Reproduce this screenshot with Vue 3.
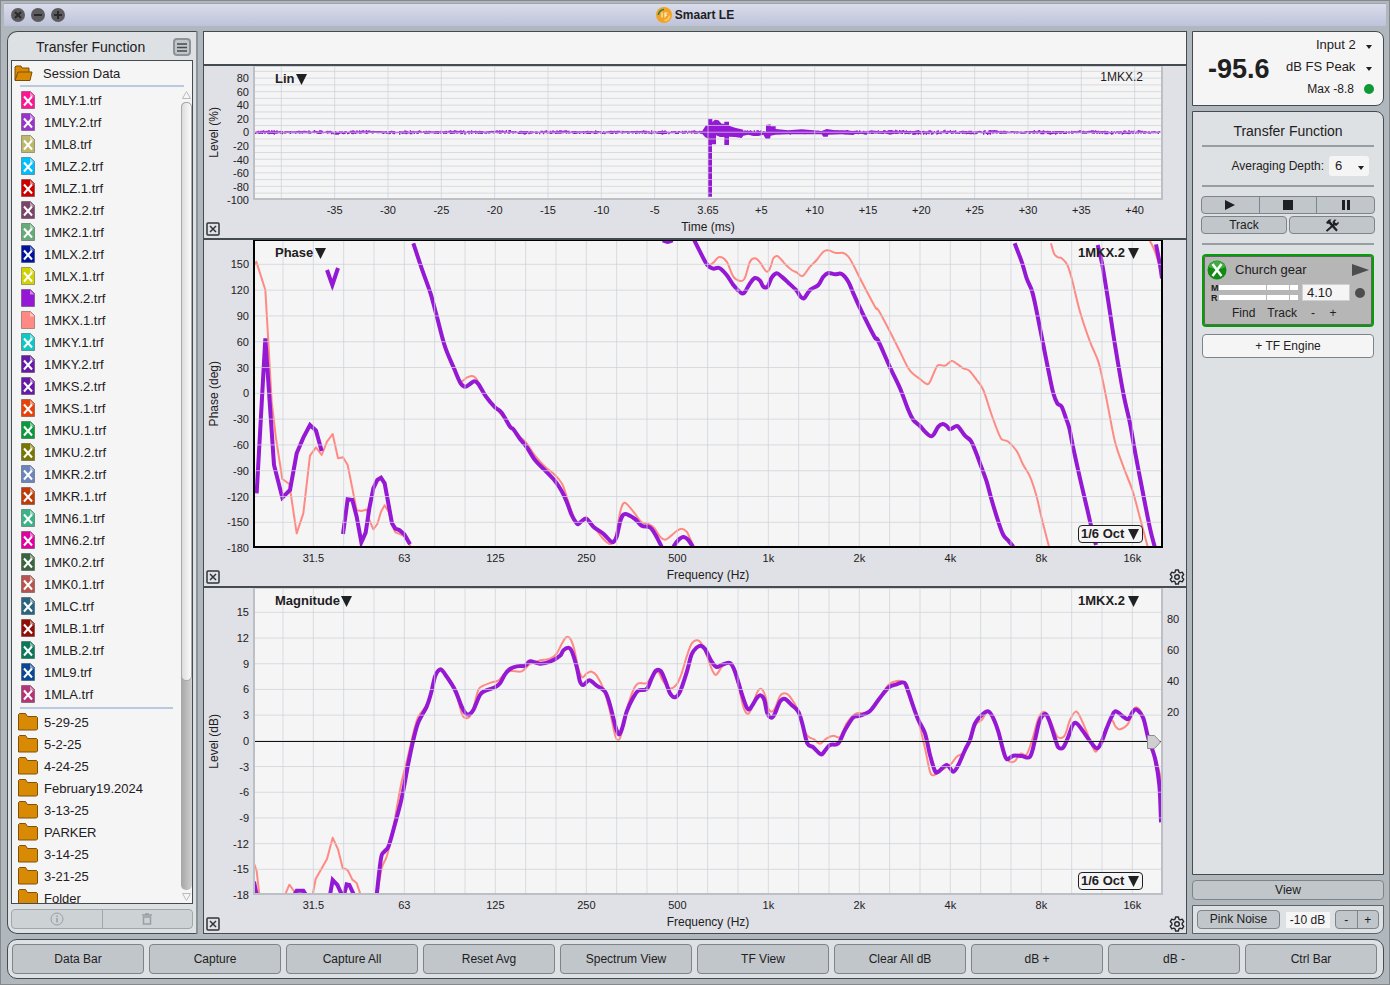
<script setup>
import { ref } from 'vue'

const files = ref([
    { name: '1MLY.1.trf', color: '#ff1493' },
    { name: '1MLY.2.trf', color: '#9a32cd' },
    { name: '1ML8.trf', color: '#bdb76b' },
    { name: '1MLZ.2.trf', color: '#00bfff' },
    { name: '1MLZ.1.trf', color: '#cd0000' },
    { name: '1MK2.2.trf', color: '#7a4468' },
    { name: '1MK2.1.trf', color: '#66ab78' },
    { name: '1MLX.2.trf', color: '#00149b' },
    { name: '1MLX.1.trf', color: '#d2d200' },
    { name: '1MKX.2.trf', color: '#9418d4', shown: true },
    { name: '1MKX.1.trf', color: '#ff8a84', shown: true },
    { name: '1MKY.1.trf', color: '#0fc8c4' },
    { name: '1MKY.2.trf', color: '#661aa6' },
    { name: '1MKS.2.trf', color: '#661aa6' },
    { name: '1MKS.1.trf', color: '#e8420a' },
    { name: '1MKU.1.trf', color: '#0a9a3c' },
    { name: '1MKU.2.trf', color: '#787800' },
    { name: '1MKR.2.trf', color: '#6a86bc' },
    { name: '1MKR.1.trf', color: '#c03a08' },
    { name: '1MN6.1.trf', color: '#3cb488' },
    { name: '1MN6.2.trf', color: '#e000a0' },
    { name: '1MK0.2.trf', color: '#3a6440' },
    { name: '1MK0.1.trf', color: '#b85450' },
    { name: '1MLC.trf', color: '#2a6480' },
    { name: '1MLB.1.trf', color: '#901008' },
    { name: '1MLB.2.trf', color: '#087858' },
    { name: '1ML9.trf', color: '#084894' },
    { name: '1MLA.trf', color: '#b43478' }
])

const folders = ref(['5-29-25', '5-2-25', '4-24-25', 'February19.2024', '3-13-25', 'PARKER', '3-14-25', '3-21-25', 'Folder'])

const commands = ['Data Bar', 'Capture', 'Capture All', 'Reset Avg', 'Spectrum View', 'TF View', 'Clear All dB', 'dB +', 'dB -', 'Ctrl Bar']

const delay = ref('4.10')

function range(count, start, step) {
    return Array.from({ length: count }, (_, i) => start + i * step)
}

// "x,y x,y ..." to a smooth path (Catmull-Rom)
function smooth(points, k = 6) {
    const p = points.split(' ').map(s => s.split(',').map(Number))
    let d = `M${p[0][0]} ${p[0][1]}`
    for (let i = 0; i < p.length - 1; i++) {
        const a = p[i - 1] || p[i]
        const b = p[i]
        const c = p[i + 1]
        const e = p[i + 2] || c
        d += `C${b[0] + (c[0] - a[0]) / k} ${b[1] + (c[1] - a[1]) / k} ${c[0] - (e[0] - b[0]) / k} ${c[1] - (e[1] - b[1]) / k} ${c[0]} ${c[1]}`
    }
    return d
}

function straight(points) {
    return 'M' + points.split(' ').join('L')
}

// noise floor of the impulse response
function noise() {
    let seed = 7
    const rand = () => {
        seed = (seed * 16807) % 2147483647
        return seed / 2147483647
    }
    let d = ''
    for (let x = 0; x < 2715; x += 4) {
        const gain = x > 1800 && x < 2200 ? 1.3 : 1
        const up = Math.round(2 + rand() * 5 * gain * (0.75 + 0.25 * Math.sin(x / 23)))
        const down = Math.round(2 + rand() * 5 * gain * (0.75 + 0.25 * Math.sin(x / 31)))
        d += `M${x} ${196 - up}h4v${up + down}h-4z`
    }
    return d
}

const burst = 'M1340 194L1353 175H1359V155H1372V165L1380 158L1390 160L1400 170H1408V164H1422V176L1440 182L1465 188V194H1533V174L1547 172V178H1562V186L1600 190L1640 187L1700 192L1715 186L1740 190L1760 190L1830 194L1850 190L1870 194L1890 194L1905 189L1925 193L1980 192L1990 189L2000 194V199L1960 198L1925 199L1905 203L1890 199L1800 201L1795 204L1760 202L1720 203L1718 209H1705L1700 202L1600 202L1562 203L1547 206L1545 215H1532L1525 203L1510 207H1495L1480 203L1465 206L1460 213L1440 210L1422 209V234H1408V210L1395 210L1383 205V232H1371V389H1359V215L1350 210L1340 199Z'

const phaseRed = [
    straight('0,72 4,62 31,147 40,302 50,482 63,592 82,714 103,729 125,877 145,817 165,644 183,619 200,642 216,602 233,579 249,652 264,649 278,672 293,747 305,808 320,810 335,805 343,837 355,865 367,849 378,812 389,793 401,812 411,852 421,874 435,879 450,887 467,917'),
    smooth('475,7 525,152 547,232 570,317 597,382 615,419 625,418 635,410 650,405 663,412 685,452 720,498 770,559 795,587 815,607 840,644 870,677 900,702 922,730 935,767 950,812 967,845 993,829 1015,855 1045,894 1065,909 1077,902 1085,872 1097,807 1110,785 1135,812 1160,844 1180,849 1197,860 1215,887 1230,896 1245,887 1265,870 1280,863 1295,872 1305,892 1317,917'),
    smooth('1315,-8 1335,32 1360,70 1375,65 1393,48 1415,62 1435,107 1457,120 1470,110 1485,62 1500,52 1515,64 1535,92 1547,77 1555,52 1567,45 1580,57 1590,69 1610,87 1625,94 1643,105 1665,77 1685,57 1705,32 1720,28 1743,36 1765,36 1780,47 1795,72 1815,112 1860,197 1870,207 1905,272 1935,332 1960,382 1975,399 1995,414 2015,429 2025,422 2045,377 2055,372 2070,374 2090,360 2105,368 2125,382 2143,389 2165,417 2185,447 2210,522 2235,587 2245,597 2260,602 2285,630 2305,672 2325,707 2345,767 2360,832 2382,917'),
    smooth('2388,7 2397,37 2407,48 2420,52 2437,72 2450,112 2475,212 2505,302 2530,362 2543,417 2560,502 2580,602 2605,677 2632,747 2650,812 2678,917'),
    smooth('2685,0 2700,32 2720,92')
]

const phasePurple = [
    straight('5,757 31,292 57,672 82,770 105,747 125,637 145,590 165,552 183,569 200,630'),
    straight('216,87 232,132 249,81'),
    straight('264,879 278,775 292,777 305,827 319,904 332,875 343,802 355,742 367,717 378,710 389,727 400,787 411,847 421,863 433,867 448,880 465,910'),
    smooth('475,7 500,82 525,152 535,187 547,232 570,317 597,382 617,427 632,437 645,429 658,421 670,429 693,467 720,499 740,515 765,557 775,565 795,594 815,618 840,657 870,688 900,720 920,750 935,782 950,822 963,844 970,849 993,833 1015,857 1045,878 1065,899 1075,903 1085,887 1097,837 1110,819 1140,834 1160,854 1185,859 1200,879 1220,917'),
    smooth('1255,917 1270,897 1285,888 1300,897 1313,917'),
    smooth('1223,-2 1238,3 1253,-2'),
    smooth('1315,-8 1335,32 1357,72 1375,83 1393,81 1415,102 1435,132 1455,153 1467,156 1485,127 1500,111 1515,119 1525,137 1538,137 1550,110 1565,97 1580,107 1600,125 1625,149 1635,165 1647,172 1665,147 1690,132 1705,107 1720,96 1740,100 1760,99 1780,122 1795,157 1813,197 1835,242 1860,290 1870,300 1905,379 1935,442 1960,507 1975,537 1995,555 2010,572 2025,585 2035,582 2050,557 2063,549 2075,555 2085,565 2100,557 2110,557 2130,584 2147,599 2160,627 2175,667 2195,722 2210,777 2230,842 2245,882 2260,899 2275,917'),
    smooth('2279,7 2300,62 2315,112 2330,147 2340,187 2355,262 2365,312 2380,387 2395,457 2407,487 2420,497 2433,532 2443,562 2455,622 2475,712 2495,797 2510,862 2523,912'),
    smooth('2528,12 2542,72 2560,182 2580,312 2605,457 2625,547 2640,632 2665,762 2685,862 2699,917'),
    smooth('2703,10 2715,72 2721,112')
]

const magRed = [
    straight('-5,818 5,846 13,918'),
    straight('90,918 103,887 117,906 121,918'),
    straight('173,918 182,870 216,810 233,746 249,781 263,837 278,843 292,872 305,882 317,918'),
    smooth('367,918 380,838 395,803 410,743 425,658 440,578 455,518 475,433 490,383 515,348 528,308 540,260 557,238 575,258 600,300 620,373 632,387 643,384 655,358 670,303 685,290 710,280 730,275 750,253 770,246 800,247 825,225 855,214 885,209 905,194 920,165 933,145 945,148 957,178 970,238 982,265 995,253 1010,248 1025,260 1047,303 1065,368 1080,438 1090,454 1100,433 1115,363 1135,303 1150,283 1175,282 1193,258 1210,250 1225,278 1245,298 1265,286 1280,253 1295,203 1310,164 1328,154 1345,173 1360,213 1375,250 1385,256 1405,228 1425,222 1445,268 1465,353 1478,375 1490,358 1505,313 1518,299 1530,318 1540,358 1550,368 1560,358 1575,321 1590,313 1605,323 1630,366 1645,418 1660,443 1677,451 1695,464 1715,448 1735,440 1755,444 1775,403 1800,375 1825,372 1845,365 1875,328 1900,288 1925,276 1945,280 1960,318 1990,398 2010,478 2025,548 2035,559 2045,553 2075,534 2090,523 2105,503 2130,488 2145,450 2163,406 2180,393 2200,366 2215,388 2230,428 2247,498 2265,518 2280,516 2297,494 2315,496 2333,448 2350,388 2368,368 2385,393 2405,440 2417,447 2430,438 2445,393 2462,368 2475,383 2495,428 2515,478 2525,486 2540,453 2555,413 2570,393 2582,413 2595,421 2620,403 2635,363 2645,355 2660,373 2680,443 2700,503 2715,558 2721,628')
]

const magPurple = [
    straight('-3,878 5,918'),
    straight('118,918 125,905 145,905 153,918'),
    straight('225,918 233,873 247,888 262,920'),
    straight('267,918 275,886 283,888 297,918'),
    smooth('365,918 378,808 388,788 400,773 415,723 440,628 460,523 475,453 490,400 515,353 528,313 540,263 550,245 560,243 575,263 600,303 620,353 632,373 643,376 655,363 675,318 690,306 720,295 735,283 750,256 765,240 785,232 810,230 825,217 855,224 885,218 915,200 925,184 940,176 950,186 965,233 975,278 985,288 1003,274 1025,290 1050,308 1065,348 1083,418 1093,436 1103,413 1115,368 1135,325 1150,305 1175,300 1190,268 1203,245 1217,246 1230,273 1245,313 1260,325 1275,308 1295,250 1310,196 1325,176 1337,170 1350,180 1370,218 1385,234 1400,228 1425,222 1440,248 1460,313 1475,355 1485,359 1505,328 1517,319 1528,333 1537,373 1550,386 1560,373 1575,338 1590,330 1610,348 1630,368 1643,408 1657,463 1675,475 1698,496 1710,485 1725,468 1750,463 1770,423 1795,385 1813,381 1845,366 1870,333 1900,296 1925,286 1948,281 1960,308 1975,353 1990,393 2010,433 2025,498 2040,546 2050,548 2075,528 2095,548 2110,528 2130,483 2145,453 2160,403 2180,378 2200,367 2215,388 2230,428 2243,478 2255,510 2275,500 2300,501 2325,503 2340,453 2353,398 2370,375 2382,393 2400,448 2410,475 2425,475 2440,443 2453,408 2465,403 2485,428 2510,463 2527,478 2540,458 2555,418 2570,383 2582,367 2605,383 2620,390 2635,366 2647,363 2665,388 2680,448 2700,508 2713,588 2718,700')
]

const octaves = ['31.5', '63', '125', '250', '500', '1k', '2k', '4k', '8k', '16k'].map((t, i) => ({ t, x: 175 + i * 273 }))
const octaveGrid = range(29, 84, 91)

const charts = ref([
    {
        id: 'impulse',
        title: 'Lin',
        trace: '1MKX.2',
        yTitle: 'Level (%)',
        xTitle: 'Time (ms)',
        height: 393,
        grid: { x: range(17, 79, 160), y: range(19, 13, 20.3) },
        yTicks: ['80', '60', '40', '20', '0', '-20', '-40', '-60', '-80', '-100'].map((t, i) => ({ t, y: 34 + i * 40.6 })),
        xTicks: ['-35', '-30', '-25', '-20', '-15', '-10', '-5', '3.65', '+5', '+10', '+15', '+20', '+25', '+30', '+35', '+40'].map((t, i) => ({ t, x: 239 + i * 160 })),
        fills: [noise(), burst],
        red: [],
        purple: []
    },
    {
        id: 'phase',
        title: 'Phase',
        trace: '1MKX.2',
        yTitle: 'Phase (deg)',
        xTitle: 'Frequency (Hz)',
        height: 915,
        active: true,
        banded: true,
        grid: { x: octaveGrid, y: range(11, 70, 77.4) },
        yTicks: range(12, 150, -30).map((t, i) => ({ t, y: 70 + i * 77.4 })),
        xTicks: octaves,
        fills: [],
        red: phaseRed,
        purple: phasePurple
    },
    {
        id: 'magnitude',
        title: 'Magnitude',
        trace: '1MKX.2',
        yTitle: 'Level (dB)',
        xTitle: 'Frequency (Hz)',
        height: 912,
        banded: true,
        zero: 457,
        grid: { x: octaveGrid, y: range(11, 70, 77.1) },
        yTicks: range(12, 15, -3).map((t, i) => ({ t, y: 70 + i * 77.1 })),
        rightTicks: ['80', '60', '40', '20'].map((t, i) => ({ t, y: 90 + i * 93 })),
        xTicks: octaves,
        fills: [],
        red: magRed,
        purple: magPurple
    }
])

function percent(value, total) {
    return (value / total * 100).toFixed(3) + '%'
}
</script>

<template>
    <div class="window">
        <header class="title-bar">
            <div class="lights">
                <button type="button" aria-label="Close window">
                    <svg width="14" height="14" viewBox="0 0 14 14"><circle cx="7" cy="7" r="7" /><path d="M4 4l6 6M10 4l-6 6" /></svg>
                </button>
                <button type="button" aria-label="Minimize window">
                    <svg width="14" height="14" viewBox="0 0 14 14"><circle cx="7" cy="7" r="7" /><path d="M3 7h8" /></svg>
                </button>
                <button type="button" aria-label="Maximize window">
                    <svg width="14" height="14" viewBox="0 0 14 14"><circle cx="7" cy="7" r="7" /><path d="M3 7h8M7 3v8" /></svg>
                </button>
            </div>
            <h1>
                <svg width="16" height="16" viewBox="0 0 16 16">
                    <circle cx="8" cy="8" r="8" fill="#f2a324" />
                    <path d="M2.500 8A5.500 5.500 0 0 1 8 2.500" fill="none" stroke="#2d8056" stroke-width="1.500" />
                    <path d="M13.500 8.500A5.500 5.500 0 0 1 8.500 13.500" fill="none" stroke="#ffd671" stroke-width="1.500" />
                    <path d="M6 5.500v5M9 10.500V6h2.500M9 8.200h2" fill="none" stroke="#fff0d0" stroke-width="1.200" />
                </svg>
                Smaart LE
            </h1>
        </header>

        <main class="workspace">
            <aside class="panel data-bar">
                <div class="data-head">
                    <h2>Transfer Function</h2>
                    <button type="button" class="menu-button" aria-label="Menu">
                        <svg width="10" height="9" viewBox="0 0 10 9"><path d="M0 1h10M0 4.500h10M0 8h10" stroke="#454b4f" stroke-width="1.300" /></svg>
                    </button>
                </div>

                <div class="file-box">
                    <div class="session">
                        <svg width="19" height="17" viewBox="0 0 19 17">
                            <path d="M1 15V2l1-1h5l1 2h7v4" fill="#d98a04" stroke="#7d4e02" />
                            <path d="M1 15.500L4 7h14l-2 8.500z" fill="#d98a04" stroke="#7d4e02" />
                        </svg>
                        <span>Session Data</span>
                    </div>
                    <div class="file-scroll">
                        <div class="file-list">
                            <ul>
                                <li v-for="file in files" :key="file.name">
                                    <svg width="14" height="18" viewBox="0 0 14 18">
                                        <path d="M.5.5h9l4 4v13H.5z" :fill="file.color" stroke="#000" stroke-opacity=".3" />
                                        <path d="M9 1v4.500h4.500z" fill="#fff" fill-opacity=".5" />
                                        <path v-if="!file.shown" d="M3 5.500l8 9M11 5.500l-8 9" stroke="#fff" stroke-width="2" />
                                    </svg>
                                    <span>{{ file.name }}</span>
                                </li>
                            </ul>
                            <ul class="folders">
                                <li v-for="folder in folders" :key="folder">
                                    <svg width="20" height="18" viewBox="0 0 20 18">
                                        <path d="M.5 17V1.500l1-1h6l2 3h9l1 1V16l-1 1z" fill="#d98a04" stroke="#80510a" />
                                    </svg>
                                    <span>{{ folder }}</span>
                                </li>
                            </ul>
                        </div>
                        <div class="scrollbar">
                            <svg width="9" height="8" viewBox="0 0 9 8"><path d="M.5 7.500L4.500.5l4 7z" fill="none" stroke="#b9bbbc" /></svg>
                            <div class="track"><div class="thumb"></div></div>
                            <svg width="9" height="8" viewBox="0 0 9 8"><path d="M.5.5l4 7 4-7z" fill="none" stroke="#b9bbbc" /></svg>
                        </div>
                    </div>
                </div>

                <div class="segments data-foot">
                    <button type="button" aria-label="Info" disabled>
                        <svg width="14" height="14" viewBox="0 0 14 14" fill="none" stroke="#999fa3"><circle cx="7" cy="7" r="6" /><path d="M7 6v4.500M7 3.500v1.500" stroke-width="1.500" /></svg>
                    </button>
                    <button type="button" aria-label="Delete" disabled>
                        <svg width="10" height="12" viewBox="0 0 10 12" fill="none" stroke="#999fa3" stroke-width="1.500"><path d="M0 2h10M3 1h4M1.500 4v7h7V4z" /></svg>
                    </button>
                </div>
            </aside>

            <section class="plots">
                <div class="cursor-strip"></div>
                <div v-for="chart in charts" :key="chart.id" class="chart">
                    <div class="y-axis">
                        <span class="y-title">{{ chart.yTitle }}</span>
                        <svg class="ticks">
                            <text v-for="tick in chart.yTicks" :key="tick.t" x="100%" :y="percent(tick.y, chart.height)" dy="4" text-anchor="end">{{ tick.t }}</text>
                        </svg>
                    </div>

                    <div class="plot" :class="{ active: chart.active }">
                        <svg class="graph" :viewBox="`0 0 2718 ${chart.height}`" preserveAspectRatio="none">
                            <path v-for="(d, i) in chart.fills" :key="'f' + i" :d="d" class="fill" />
                            <path v-for="(d, i) in chart.red" :key="'r' + i" :d="d" class="line red" />
                            <path v-for="(d, i) in chart.purple" :key="'p' + i" :d="d" class="line purple" />
                            <path v-for="x in chart.grid.x" :key="'x' + x" :d="`M${x} 0V${chart.height}`" class="line grid" />
                            <path v-for="y in chart.grid.y" :key="'y' + y" :d="`M0 ${y}H2718`" class="line grid" />
                            <path v-if="chart.zero" :d="`M0 ${chart.zero}H2718`" class="line zero" />
                        </svg>
                        <label class="picker plot-type">
                            <select :aria-label="chart.id + ' plot type'"><option>{{ chart.title }}</option></select>
                            <svg width="11" height="11" viewBox="0 0 11 11"><path d="M0 0h11L5.500 11z" /></svg>
                        </label>
                        <label v-if="chart.banded" class="picker trace">
                            <select :aria-label="chart.id + ' trace'"><option>{{ chart.trace }}</option></select>
                            <svg width="11" height="11" viewBox="0 0 11 11"><path d="M0 0h11L5.500 11z" /></svg>
                        </label>
                        <span v-else class="trace-name">{{ chart.trace }}</span>
                        <label v-if="chart.banded" class="picker banding">
                            <select :aria-label="chart.id + ' smoothing'"><option>1/6 Oct</option></select>
                            <svg width="11" height="11" viewBox="0 0 11 11"><path d="M0 0h11L5.500 11z" /></svg>
                        </label>
                        <svg v-if="chart.zero" class="handle" width="14" height="14" viewBox="0 0 14 14">
                            <path d="M.5.5h7l6 6.500-6 6.500h-7z" fill="#cfcfcf" stroke="#8b8b8b" />
                        </svg>
                    </div>

                    <div class="y-axis-right">
                        <svg class="ticks">
                            <text v-for="tick in chart.rightTicks" :key="tick.t" x="4" :y="percent(tick.y, chart.height)" dy="4">{{ tick.t }}</text>
                        </svg>
                    </div>

                    <div class="corner">
                        <button type="button" aria-label="Close plot">
                            <svg width="14" height="14" viewBox="0 0 14 14" fill="none" stroke="#30353a"><rect x="1" y="1" width="12" height="12" rx="1" stroke-width="1.500" /><path d="M4 4l6 6M10 4l-6 6" stroke-width="1.500" /></svg>
                        </button>
                    </div>
                    <div class="x-axis">
                        <svg class="x-ticks">
                            <text v-for="tick in chart.xTicks" :key="tick.t" :x="percent(tick.x, 2718)" y="14" text-anchor="middle">{{ tick.t }}</text>
                        </svg>
                        <span>{{ chart.xTitle }}</span>
                    </div>
                    <div class="corner right">
                        <button v-if="chart.banded" type="button" aria-label="Plot settings">
                            <svg width="16" height="16" viewBox="0 0 16 16" fill="none" stroke="#25292c" stroke-width="1.400" stroke-linejoin="round">
                                <path d="M6.600 1h2.800l.5 2.100 1.300.7 2-.7 1.500 2.500L13.200 7.200v1.600l1.500 1.500-1.500 2.500-2-.6-1.300.7-.5 2.100H6.600l-.5-2.100-1.300-.7-2 .6-1.500-2.500L2.800 8.800V7.200L1.300 5.600l1.500-2.500 2 .7 1.300-.7z" />
                                <circle cx="8" cy="8" r="2.300" />
                            </svg>
                        </button>
                    </div>
                </div>
            </section>

            <aside class="control-bar">
                <section class="panel meter">
                    <output>-95.6</output>
                    <div class="meter-side">
                        <label class="picker">
                            <select aria-label="Input"><option>Input 2</option></select>
                            <svg width="6" height="4" viewBox="0 0 6 4"><path d="M0 0h6L3 4z" /></svg>
                        </label>
                        <label class="picker">
                            <select aria-label="Scale"><option>dB FS Peak</option></select>
                            <svg width="6" height="4" viewBox="0 0 6 4"><path d="M0 0h6L3 4z" /></svg>
                        </label>
                        <div class="max">Max -8.8 <i class="dot"></i></div>
                    </div>
                </section>

                <section class="panel transfer">
                    <h2>Transfer Function</h2>
                    <hr>
                    <div class="depth">
                        <label for="depth">Averaging Depth:</label>
                        <span class="picker depth-box">
                            <select id="depth"><option>6</option></select>
                            <svg width="6" height="4" viewBox="0 0 6 4"><path d="M0 0h6L3 4z" /></svg>
                        </span>
                    </div>
                    <hr>
                    <div class="transport">
                        <div class="segments">
                            <button type="button" aria-label="Play"><svg width="10" height="10" viewBox="0 0 10 10"><path d="M0 0l10 5-10 5z" /></svg></button>
                            <button type="button" aria-label="Stop"><svg width="10" height="10" viewBox="0 0 10 10"><path d="M0 0h10v10H0z" /></svg></button>
                            <button type="button" aria-label="Pause"><svg width="8" height="10" viewBox="0 0 8 10"><path d="M0 0h3v10H0zM5 0h3v10H5z" /></svg></button>
                        </div>
                        <div class="pair">
                            <button type="button" class="button">Track</button>
                            <button type="button" class="button" aria-label="Settings">
                                <svg width="14" height="13" viewBox="0 0 14 13">
                                    <path d="M2.200 12.800L.8 11.400 8 5 7.500 2.800 9.500.5l2 .2L9.800 2.400l.4 1.400 1.500.4L13.500 2.500l.2 2-2.200 2.200-2.200-.3z" />
                                    <path d="M1.200 3.200L4 .5h2.500L5.200 2l.8 1L12.800 11l-1.500 1.600L4.200 5 3 4.600 2 5z" />
                                </svg>
                            </button>
                        </div>
                    </div>
                    <hr>

                    <article class="engine">
                        <div class="engine-head">
                            <svg width="20" height="20" viewBox="0 0 20 20"><circle cx="10" cy="10" r="9.500" fill="#108a12" /><path d="M1.500 7a9 9 0 0 1 17 0q-8 4-17 0" fill="#3fae3f" /><path d="M5.500 4l9 12M14.500 4l-9 12" stroke="#fff" stroke-width="2.500" /></svg>
                            <h3>Church gear</h3>
                            <button type="button" aria-label="Run engine"><svg width="17" height="12" viewBox="0 0 17 12"><path d="M0 0l17 6-17 6z" fill="#4d4d4d" /></svg></button>
                        </div>
                        <div class="engine-levels">
                            <div class="levels">
                                <div class="level"><span>M</span><i></i><i></i><i></i></div>
                                <div class="level"><span>R</span><i></i><i></i><i></i></div>
                            </div>
                            <input v-model="delay" type="text" aria-label="Delay">
                            <i class="dot"></i>
                        </div>
                        <div class="engine-foot">
                            <button type="button">Find</button>
                            <button type="button">Track</button>
                            <button type="button" class="step">-</button>
                            <button type="button" class="step">+</button>
                        </div>
                    </article>
                    <button type="button" class="button add-engine">+ TF Engine</button>
                </section>

                <button type="button" class="button view">View</button>

                <section class="panel generator">
                    <button type="button" class="button noise">Pink Noise</button>
                    <output>-10 dB</output>
                    <div class="segments">
                        <button type="button">-</button>
                        <button type="button">+</button>
                    </div>
                </section>
            </aside>
        </main>

        <nav class="panel command-bar">
            <button v-for="command in commands" :key="command" type="button" class="button">{{ command }}</button>
        </nav>
    </div>
</template>

<style>
body {
    margin: 0;
    background: #b0b8be;
}
</style>

<style scoped>
* {
    box-sizing: border-box;
}

.window {
    height: 100vh;
    min-height: 700px;
    display: flex;
    flex-direction: column;
    gap: 5px;
    padding: 2px 3px 3px;
    border: 1px solid #85898c;
    background: #b0b8be;
    color: #1e2022;
    fill: #1e2022;
    font: 12px/16px "Liberation Sans", Arial, sans-serif;
}

h1,
h2,
h3,
ul {
    margin: 0;
    padding: 0;
    font-weight: normal;
}

button,
select,
input {
    margin: 0;
    padding: 0;
    border: 0;
    background: none;
    color: inherit;
    font: inherit;
}

select {
    appearance: none;
    outline: none;
}

svg {
    display: block;
    flex: none;
}

.title-bar {
    position: relative;
    height: 23px;
    flex: none;
    display: flex;
    align-items: center;
    justify-content: center;
    border-top: 1px solid #a0a3ae;
    background: linear-gradient(#d9dcea, #bfc3da);
}

.title-bar h1 {
    display: flex;
    align-items: center;
    gap: 3px;
    font-size: 12px;
    font-weight: bold;
}

.lights {
    position: absolute;
    left: 7px;
    top: 4px;
    display: flex;
    gap: 6px;
}

.lights circle {
    fill: #5c5c5e;
}

.lights path {
    stroke: #2a2a2c;
    stroke-width: 2;
}

.workspace {
    flex: 1;
    min-height: 0;
    display: flex;
    gap: 5px;
    padding: 0 2px 0 3px;
}

.panel {
    border: 1px solid #444c51;
    background: #dde1e4;
}

/* shared buttons */
.button,
.segments {
    border: 1px solid #7d858a;
    border-radius: 4px;
    background: #c0c6ca;
}

.segments {
    display: flex;
}

.segments button {
    flex: 1;
    display: flex;
    align-items: center;
    justify-content: center;
}

.segments button + button {
    border-left: 1px solid #7d858a;
}

.picker {
    display: flex;
    align-items: center;
}

.dot {
    width: 10px;
    height: 10px;
    border-radius: 50%;
}

/* data bar */
.data-bar {
    width: 191px;
    flex: none;
    display: flex;
    flex-direction: column;
    padding: 0 3px 4px;
    border-right: 2px solid #8b9398;
    border-radius: 10px 0 0 10px;
}

.data-head {
    height: 28px;
    flex: none;
    display: flex;
    align-items: center;
    padding: 2px 2px 0 25px;
}

.data-head h2,
.transfer h2 {
    font-size: 14px;
}

.data-head h2 {
    flex: 1;
    white-space: nowrap;
}

.menu-button {
    width: 18px;
    height: 18px;
    display: flex;
    align-items: center;
    justify-content: center;
    border: 2px solid #8b9398;
    border-radius: 4px;
    background: #c0c6ca;
}

.file-box {
    flex: 1;
    min-height: 0;
    display: flex;
    flex-direction: column;
    border: 1px solid #444c51;
    background: #f5f5f5;
    font-size: 13px;
    line-height: 20px;
}

.file-box span {
    padding-top: 2px;
}

.session {
    height: 26px;
    margin: 0 8px;
    flex: none;
    display: flex;
    align-items: center;
    gap: 10px;
    border-bottom: 2px solid #b9c9df;
}

.session svg {
    margin-left: -6px;
}

.file-scroll {
    flex: 1;
    min-height: 0;
    display: flex;
}

.file-list {
    flex: 1;
    overflow: hidden;
    padding: 2px 8px 0;
}

.file-list li {
    height: 22px;
    display: flex;
    align-items: center;
    gap: 9px;
    padding-left: 1px;
}

.folders {
    margin-top: 2px;
    padding-top: 2px;
    border-top: 2px solid #b9c9df;
}

.folders li {
    gap: 6px;
    margin-left: -3px;
}

.scrollbar {
    width: 11px;
    display: flex;
    flex-direction: column;
    align-items: center;
    gap: 3px;
    padding: 4px 0 2px;
}

.track {
    flex: 1;
    width: 11px;
    border-radius: 5px;
    background: linear-gradient(90deg, #a5a5a5, #cfcfcf);
}

.thumb {
    height: 73.5%;
    border: 1px solid #a9a9a9;
    border-radius: 5px;
    background: linear-gradient(90deg, #dcdcdc, #fafafa);
}

.data-foot {
    height: 20px;
    flex: none;
    margin-top: 5px;
    border-color: #a0a7ab;
    background: #cdd2d5;
}

.data-foot button + button {
    border-color: #a0a7ab;
}

/* plots */
.plots {
    flex: 1;
    min-width: 0;
    display: grid;
    grid-template-rows: 32px minmax(0, 172fr) minmax(0, 346fr) minmax(0, 345fr);
    gap: 2px;
    border: 1px solid #444c51;
    background: #444c51;
}

.cursor-strip {
    background: #f5f5f5;
}

.chart {
    display: grid;
    grid-template-columns: 49px minmax(0, 1fr) 23px;
    grid-template-rows: minmax(0, 1fr) 38px;
    background: #dfe1e6;
}

.y-axis {
    display: flex;
    align-items: center;
    padding: 1px 4px 2px 2px;
}

.y-title {
    width: 16px;
    flex: none;
    writing-mode: vertical-rl;
    transform: rotate(180deg);
    text-align: center;
}

.ticks {
    flex: 1;
    width: 100%;
    min-width: 0;
    height: 100%;
    overflow: visible;
}

.y-axis-right {
    padding: 1px 0 2px;
}

.ticks text,
.x-ticks text {
    font-size: 11px;
}

.plot {
    position: relative;
    border: 2px solid #bcc0c5;
    border-top: 1px solid #cfd2d6;
    background: #f5f5f5;
}

.plot.active {
    border-color: #000;
}

.graph {
    position: absolute;
    inset: 0;
    width: 100%;
    height: 100%;
}

.line {
    fill: none;
    vector-effect: non-scaling-stroke;
}

.fill {
    fill: #9418d4;
}

.red {
    stroke: #ff8a84;
    stroke-width: 2px;
    stroke-linejoin: round;
}

.purple {
    stroke: #9418d4;
    stroke-width: 4px;
}

.grid {
    stroke: #cdd1d8;
    stroke-opacity: 0.75;
}

.zero {
    stroke: #111;
    shape-rendering: crispEdges;
}

.plot .picker {
    position: absolute;
    font-size: 13px;
    font-weight: bold;
}

.plot-type,
.trace {
    top: 4px;
}

.plot-type {
    left: 20px;
    gap: 1px;
}

.trace {
    right: 22px;
    gap: 3px;
}

.banding {
    right: 18px;
    bottom: 3px;
    height: 18px;
    gap: 3px;
    padding: 0 3px 0 2px;
    border: 1px solid #1e2022;
    border-radius: 4px;
    background: #f5f5f5;
}

.trace-name {
    position: absolute;
    top: 2px;
    right: 18px;
}

.handle {
    position: absolute;
    right: 0;
    top: calc(50% - 6px);
}

.corner {
    display: flex;
    align-items: flex-end;
    padding: 2px;
}

.corner.right {
    justify-content: flex-end;
    padding: 1px;
}

.x-axis {
    padding: 0 2px;
    text-align: center;
}

.x-ticks {
    width: 100%;
    height: 19px;
    overflow: visible;
}

/* control bar */
.control-bar {
    width: 192px;
    flex: none;
    display: flex;
    flex-direction: column;
    gap: 5px;
}

.meter {
    height: 75px;
    display: flex;
    align-items: center;
    justify-content: space-between;
    padding: 0 9px 0 15px;
    border-radius: 0 8px 8px 0;
    background: #f5f5f5;
}

.meter output {
    font-size: 27px;
    line-height: 32px;
    font-weight: bold;
}

.meter-side {
    display: flex;
    flex-direction: column;
    align-items: flex-end;
    line-height: 22px;
    padding-bottom: 4px;
}

.meter-side .picker {
    height: 22px;
    gap: 10px;
    padding-right: 2px;
    font-size: 13px;
}

.meter-side .picker svg {
    margin-top: 4px;
}

.max {
    display: flex;
    align-items: center;
    gap: 10px;
}

.max .dot {
    background: #0d9a36;
}

.transfer {
    flex: 1;
    padding: 9px;
    border-radius: 0 8px 0 0;
}

.transfer h2 {
    line-height: 20px;
    text-align: center;
}

hr {
    height: 2px;
    margin: 4px 0 0;
    border: 0;
    background: #979da1;
}

.depth {
    height: 38px;
    display: flex;
    align-items: center;
    justify-content: flex-end;
    gap: 5px;
    padding-right: 5px;
}

.depth + hr {
    margin-top: 0;
}

.depth-box {
    width: 40px;
    height: 20px;
    justify-content: space-between;
    padding: 0 5px 0 6px;
    border-radius: 3px;
    background: #f5f5f5;
    font-size: 13px;
}

.depth-box svg {
    margin-top: 4px;
}

.transport {
    display: flex;
    flex-direction: column;
    gap: 2px;
    margin: 9px -1px;
}

.transport .segments,
.transport .button {
    height: 18px;
}

.pair {
    display: grid;
    grid-template-columns: 1fr 1fr;
    gap: 2px;
}

.pair .button {
    display: flex;
    align-items: center;
    justify-content: center;
}

.engine {
    height: 73px;
    margin-top: 9px;
    padding: 3px;
    border: 2px solid #0a9a0a;
    border-radius: 4px;
    background: #b6b6b6;
    box-shadow: inset 0 0 0 1px #5a6a5a;
}

.engine-head {
    height: 21px;
    display: flex;
    align-items: center;
    gap: 8px;
}

.engine-head h3 {
    flex: 1;
    font-size: 13px;
}

.engine-levels {
    height: 25px;
    display: flex;
    align-items: center;
    gap: 5px;
    padding-left: 4px;
}

.levels {
    flex: 1;
    margin-right: -1px;
}

.level {
    height: 10px;
    display: flex;
    align-items: center;
    gap: 1px;
    font-size: 9px;
    line-height: 10px;
    font-weight: bold;
}

.level span {
    width: 7px;
    flex: none;
}

.level i {
    flex: 22;
    height: 5px;
    background: #fff;
}

.level span + i {
    flex: 46;
}

.level i:last-child {
    flex: 8;
}

.engine-levels input {
    width: 48px;
    height: 17px;
    padding-left: 4px;
    border: 1px solid #d0d0d0;
    background: #f5f5f5;
    font-size: 13px;
}

.engine-levels .dot {
    background: #4d4d4d;
    margin-right: 4px;
}

.engine-foot {
    display: flex;
    gap: 12px;
    padding-left: 25px;
}

.engine-foot .step {
    width: 8px;
}

.add-engine {
    width: 100%;
    height: 24px;
    margin-top: 7px;
    background: #f5f5f5;
}

.view {
    height: 20px;
    flex: none;
}

.generator {
    height: 29px;
    flex: none;
    display: flex;
    align-items: center;
    justify-content: space-between;
    padding: 0 4px;
    border-color: #5c6469;
    border-radius: 0 0 8px 0;
}

.generator .noise {
    width: 83px;
    height: 19px;
    line-height: 17px;
}

.generator output {
    width: 44px;
    background: #f5f5f5;
    text-align: center;
}

.generator .segments {
    width: 44px;
    height: 19px;
}

.command-bar {
    height: 40px;
    flex: none;
    display: flex;
    gap: 5px;
    margin: 0 2px 2px 3px;
    padding: 4px 6px 4px 4px;
    border-radius: 10px;
}

.command-bar .button {
    flex: 1;
}
</style>
